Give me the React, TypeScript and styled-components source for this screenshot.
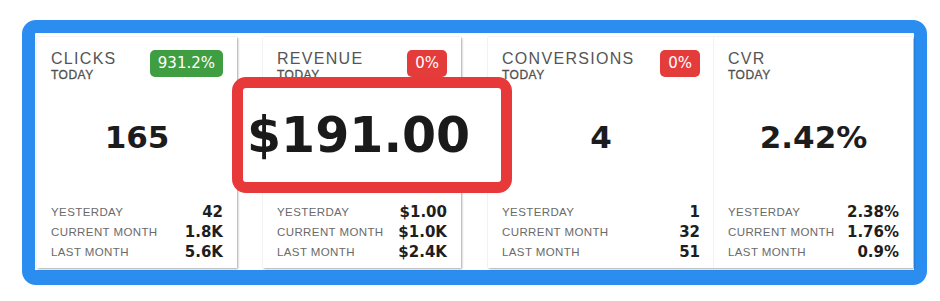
import React from 'react'
import styled, { createGlobalStyle } from 'styled-components'

type Stat = {
  label: string
  value: string
}

type Metric = {
  title: string
  value: string
  badge?: { text: string; tone: 'up' | 'down' }
  stats: Stat[]
  width: number
  gap: number
  highlight?: boolean
}

const metrics: Metric[] = [
  {
    title: 'CLICKS',
    value: '165',
    badge: { text: '931.2%', tone: 'up' },
    stats: [
      { label: 'YESTERDAY', value: '42' },
      { label: 'CURRENT MONTH', value: '1.8K' },
      { label: 'LAST MONTH', value: '5.6K' },
    ],
    width: 200,
    gap: 2,
  },
  {
    title: 'REVENUE',
    value: '$191.00',
    badge: { text: '0%', tone: 'down' },
    stats: [
      { label: 'YESTERDAY', value: '$1.00' },
      { label: 'CURRENT MONTH', value: '$1.0K' },
      { label: 'LAST MONTH', value: '$2.4K' },
    ],
    width: 198,
    gap: 26,
    highlight: true,
  },
  {
    title: 'CONVERSIONS',
    value: '4',
    badge: { text: '0%', tone: 'down' },
    stats: [
      { label: 'YESTERDAY', value: '1' },
      { label: 'CURRENT MONTH', value: '32' },
      { label: 'LAST MONTH', value: '51' },
    ],
    width: 226,
    gap: 27,
  },
  {
    title: 'CVR',
    value: '2.42%',
    stats: [
      { label: 'YESTERDAY', value: '2.38%' },
      { label: 'CURRENT MONTH', value: '1.76%' },
      { label: 'LAST MONTH', value: '0.9%' },
    ],
    width: 199,
    gap: 0,
  },
]

const GlobalStyle = createGlobalStyle`
  body {
    margin: 0;
    background: #ffffff;
    font-family: "Liberation Sans", Arial, sans-serif;
  }
`

const Page = styled.div`
  padding: 20px 13px 16px 22px;
`

const Frame = styled.div`
  box-sizing: border-box;
  width: 905px;
  height: 265px;
  border: solid #2b8def;
  border-width: 13px 13px 15px 13px;
  border-radius: 14px;
  background: #ffffff;
  display: flex;
  align-items: stretch;
  padding: 4px 1px 2px 0;
`

const Card = styled.div<{ $width: number; $gap: number }>`
  position: relative;
  box-sizing: border-box;
  width: ${(p) => p.$width}px;
  margin-left: ${(p) => p.$gap}px;
  display: flex;
  flex-direction: column;
  padding: 13px 14px 6px 14px;
  background: #ffffff;
  box-shadow: 1px 1px 2px rgba(0, 0, 0, 0.32), 0 0 1px rgba(0, 0, 0, 0.18);
`

const Header = styled.div`
  display: flex;
  justify-content: space-between;
  align-items: flex-start;
`

const Titles = styled.div`
  display: flex;
  flex-direction: column;
`

const Title = styled.div`
  font-size: 16px;
  line-height: 18px;
  letter-spacing: 1.3px;
  color: #555555;
`

const Period = styled.div`
  margin-top: 1px;
  font-size: 12px;
  line-height: 13px;
  letter-spacing: 0.5px;
  color: #505050;
  -webkit-text-stroke: 0.3px #505050;
`

const Badge = styled.div<{ $tone: 'up' | 'down' }>`
  height: 27px;
  line-height: 27px;
  padding: 0 8px;
  border-radius: 5px;
  background: ${(p) => (p.$tone === 'up' ? '#3f9e41' : '#e43b3b')};
  color: #ffffff;
  font-family: "DejaVu Sans", sans-serif;
  font-size: 15px;
`

const Main = styled.div`
  flex: 1;
  display: flex;
  align-items: center;
  justify-content: center;
  padding-bottom: 10px;
`

const BigValue = styled.div`
  font-family: "DejaVu Sans", sans-serif;
  font-weight: 700;
  font-size: 31px;
  line-height: 31px;
  color: #1c1c1c;
`

const Highlight = styled.div`
  position: absolute;
  left: -31px;
  top: 40px;
  width: 280px;
  height: 116px;
  box-sizing: border-box;
  border: 11px solid #e8393a;
  border-radius: 14px;
  background: #ffffff;
  display: flex;
  align-items: center;
  padding-left: 4px;
  z-index: 2;
`

const HugeValue = styled.div`
  font-family: "DejaVu Sans", sans-serif;
  font-weight: 700;
  font-size: 49px;
  line-height: 49px;
  color: #1a1a1a;
`

const Stats = styled.div`
  display: flex;
  flex-direction: column;
`

const StatRow = styled.div`
  display: flex;
  justify-content: space-between;
  align-items: center;
  height: 20px;
`

const StatLabel = styled.span`
  font-size: 11.5px;
  letter-spacing: 0.4px;
  color: #6a6a6a;
`

const StatValue = styled.span`
  font-family: "DejaVu Sans", sans-serif;
  font-weight: 700;
  font-size: 15px;
  color: #1e1e1e;
`

const MetricCard = ({ metric }: { metric: Metric }) => {
  return (
    <Card $width={metric.width} $gap={metric.gap}>
      <Header>
        <Titles>
          <Title>{metric.title}</Title>
          <Period>TODAY</Period>
        </Titles>
        {metric.badge && <Badge $tone={metric.badge.tone}>{metric.badge.text}</Badge>}
      </Header>
      <Main>
        {metric.highlight ? (
          <Highlight>
            <HugeValue>{metric.value}</HugeValue>
          </Highlight>
        ) : (
          <BigValue>{metric.value}</BigValue>
        )}
      </Main>
      <Stats>
        {metric.stats.map((s) => (
          <StatRow key={s.label}>
            <StatLabel>{s.label}</StatLabel>
            <StatValue>{s.value}</StatValue>
          </StatRow>
        ))}
      </Stats>
    </Card>
  )
}

const App = () => {
  return (
    <>
      <GlobalStyle />
      <Page>
        <Frame>
          {metrics.map((m) => (
            <MetricCard key={m.title} metric={m} />
          ))}
        </Frame>
      </Page>
    </>
  )
}

export default App
